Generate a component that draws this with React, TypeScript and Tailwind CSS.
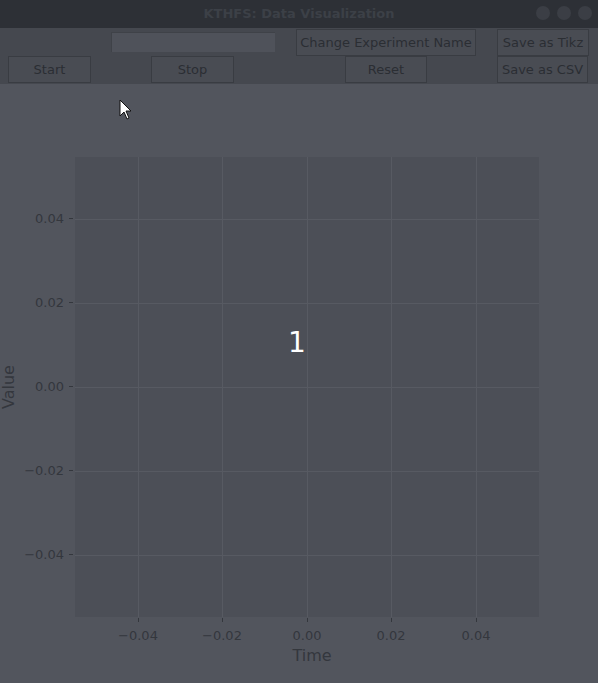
import React from 'react';

const font = { fontFamily: '"DejaVu Sans", "Liberation Sans", sans-serif' };

const yTicks = [
  { label: '0.04', y: 62 },
  { label: '0.02', y: 146 },
  { label: '0.00', y: 230 },
  { label: '\u22120.02', y: 314 },
  { label: '\u22120.04', y: 398 },
];

const xTicks = [
  { label: '\u22120.04', x: 63 },
  { label: '\u22120.02', x: 147 },
  { label: '0.00', x: 232 },
  { label: '0.02', x: 316 },
  { label: '0.04', x: 401 },
];

function Btn({ label, className }: { label: string; className: string }) {
  return (
    <button
      className={`h-[27px] flex items-center justify-center border border-[#393c42] bg-[#494c53] text-[13px] leading-none text-[#2b2e33] ${className}`}
    >
      {label}
    </button>
  );
}

function Plot() {
  return (
    <div className="relative ml-[75px] mt-[73px] w-[464px] h-[460px] bg-[#4c4f57]">
      <svg className="absolute inset-0" width="464" height="460">
        {yTicks.map((t) => (
          <line key={t.label} x1="0" x2="464" y1={t.y + 0.5} y2={t.y + 0.5} stroke="#575a62" />
        ))}
        {xTicks.map((t) => (
          <line key={t.label} y1="0" y2="460" x1={t.x + 0.5} x2={t.x + 0.5} stroke="#575a62" />
        ))}
      </svg>
      {yTicks.map((t) => (
        <div
          key={t.label}
          className="absolute right-[466px] flex items-center gap-[5px] text-[13px] text-[#34373d] leading-none"
          style={{ top: t.y - 7 }}
        >
          <span>{t.label}</span>
          <span className="w-[4px] h-px bg-[#34373d]" />
        </div>
      ))}
      {xTicks.map((t) => (
        <div
          key={t.label}
          className="absolute top-[461px] flex flex-col items-center w-[60px] text-[13px] text-[#34373d] leading-none"
          style={{ left: t.x - 30 }}
        >
          <span className="w-px h-[4px] bg-[#34373d]" />
          <span className="mt-[7px]">{t.label}</span>
        </div>
      ))}
      <div className="absolute top-[487px] left-0 right-[-10px] text-center text-[16px] text-[#34373d]">
        Time
      </div>
      <div className="absolute top-[200px] left-[-74px] w-[16px] h-[60px] flex items-center justify-center">
        <span className="-rotate-90 text-[16px] text-[#34373d] whitespace-nowrap">Value</span>
      </div>
      <div className="absolute left-[192px] top-[168px] w-[60px] h-[36px] flex items-center justify-center text-[28px] leading-none text-white">
        1
      </div>
    </div>
  );
}

export default function App() {
  return (
    <div className="relative w-[598px] h-[683px] bg-[#52555d] overflow-hidden" style={font}>
      <div className="relative h-[28px] bg-[#2d3036] flex items-center justify-center">
        <span className="font-bold text-[13px] text-[#3c4047]">KTHFS: Data Visualization</span>
        <div className="absolute right-[6px] top-[6px] flex gap-[7px]">
          <span className="w-[14px] h-[14px] rounded-full bg-[#3b3e45]" />
          <span className="w-[14px] h-[14px] rounded-full bg-[#3b3e45]" />
          <span className="w-[14px] h-[14px] rounded-full bg-[#3b3e45]" />
        </div>
      </div>
      <div className="h-[56px] bg-[#45484f]">
        <div className="flex items-start pt-[1px] h-[28px]">
          <div className="ml-[111px] mt-[3px] w-[164px] h-[20px] bg-[#4f525a] border-t border-l border-[#3f4248]" />
          <Btn label="Change Experiment Name" className="ml-[21px] w-[180px] h-[26px] pb-[1px]" />
          <Btn label="Save as Tikz" className="ml-[21px] w-[92px] h-[26px] pb-[1px]" />
        </div>
        <div className="flex items-start">
          <Btn label="Start" className="ml-[8px] w-[83px]" />
          <Btn label="Stop" className="ml-[60px] w-[83px]" />
          <Btn label="Reset" className="ml-[111px] w-[82px]" />
          <Btn label="Save as CSV" className="ml-[70px] w-[91px]" />
        </div>
      </div>
      <Plot />
      <svg className="absolute left-[119px] top-[99px]" width="14" height="22" viewBox="0 0 14 22">
        <path d="M1 1 L1 17 L5 13 L8 20 L10 19 L7 12 L12 12 Z" fill="#fff" stroke="#111" strokeWidth="1" />
      </svg>
    </div>
  );
}
